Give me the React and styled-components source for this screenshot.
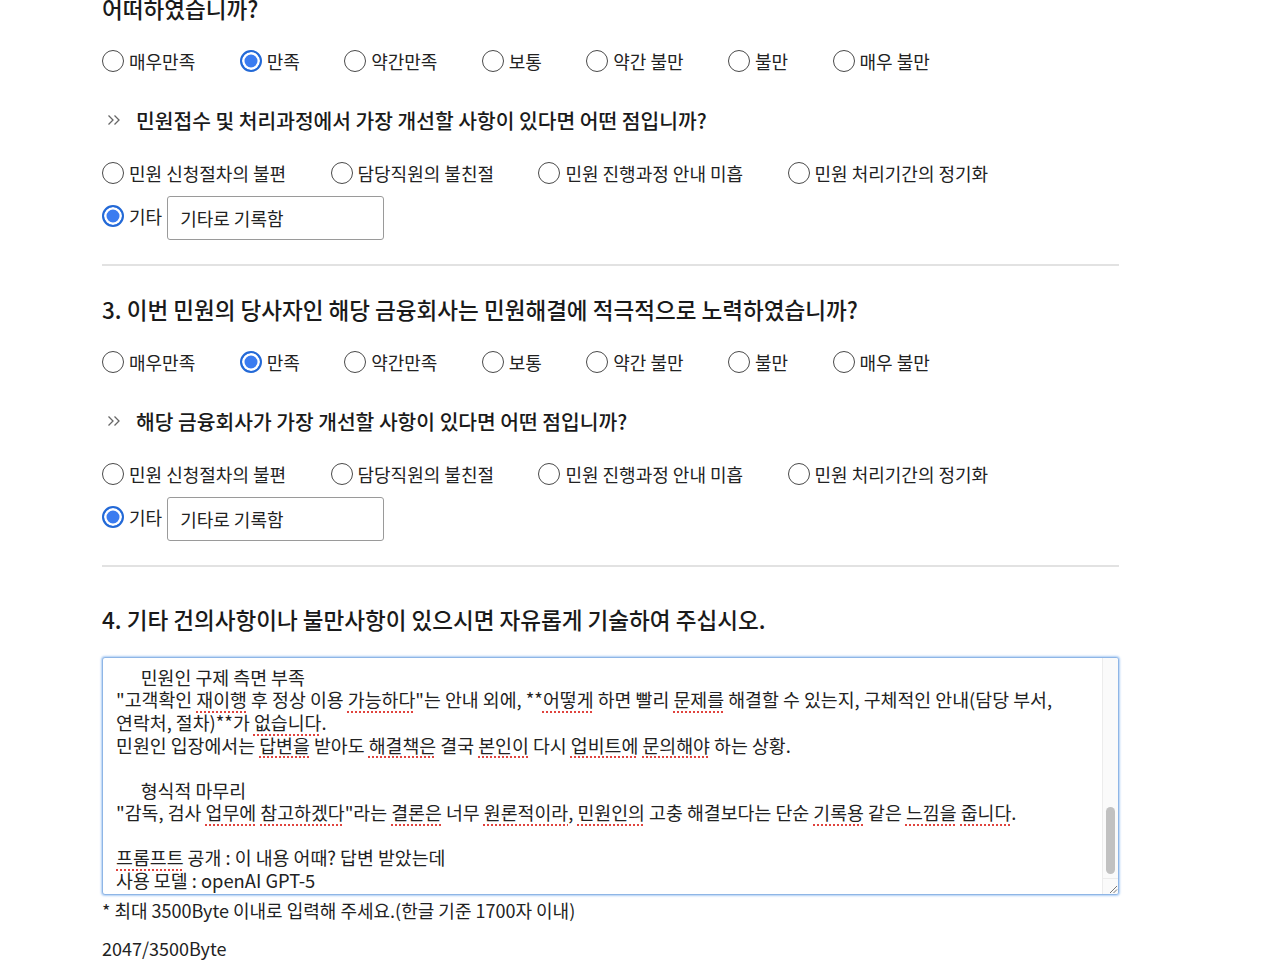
import React, { useLayoutEffect, useRef } from "react";
import styled, { createGlobalStyle } from "styled-components";

const Global = createGlobalStyle`
  html, body { margin: 0; padding: 0; background: #fff; }
  body {
    font-family: "Noto Sans CJK KR", "Noto Sans", sans-serif;
    color: #222;
  }
  * { box-sizing: border-box; }
`;

const Page = styled.div`
  width: 1017px;
  margin: -7px 0 0 102px;
  padding-bottom: 40px;
`;

const Section = styled.section`
  display: flex;
  flex-direction: column;
`;

const QuestionTitle = styled.h3`
  margin: ${(p) => p.$top || 0}px 0 0;
  font-size: 22.55px;
  line-height: 30px;
  font-weight: 500;
  color: #1a1a1a;
  white-space: nowrap;
`;

const RadioRow = styled.div`
  display: flex;
  align-items: center;
  margin-top: ${(p) => p.$top || 0}px;
  height: 24px;
`;

const RadioItem = styled.label`
  display: inline-flex;
  align-items: center;
  gap: 5px;
  margin-right: 44.4px;
  font-size: 18px;
  line-height: 24px;
  color: #222;
  white-space: nowrap;
  cursor: pointer;
`;

const RadioInput = styled.input.attrs({ type: "radio" })`
  appearance: none;
  -webkit-appearance: none;
  margin: 0;
  width: 22px;
  height: 22px;
  flex: none;
  border-radius: 50%;
  border: 1.5px solid #4a4a4a;
  background: #fff;
  &:checked {
    border: 2px solid #2369d6;
    background: #3b7cf0;
    box-shadow: inset 0 0 0 2.5px #fff;
  }
`;

const SubQuestion = styled.div`
  display: flex;
  align-items: center;
  gap: 15px;
  margin-top: ${(p) => p.$top || 0}px;
  padding-left: 5px;
  font-size: 20.35px;
  line-height: 28px;
  font-weight: 500;
  color: #1a1a1a;
  white-space: nowrap;
`;

const EtcRow = styled.div`
  display: flex;
  align-items: center;
  margin-top: 11px;
  height: 44px;
`;

const EtcLabel = styled(RadioItem)`
  margin-right: 5px;
  position: relative;
  top: -2px;
`;

const EtcInput = styled.input`
  width: 217px;
  height: 44px;
  border: 1px solid #9a9a9a;
  border-radius: 3px;
  padding: 0 12px;
  font-family: inherit;
  font-size: 18px;
  color: #222;
  background: #fff;
  outline: none;
`;

const Divider = styled.hr`
  margin: 24px 0 0;
  border: 0;
  height: 2px;
  background: #e2e2e2;
`;

const TextFrame = styled.div`
  margin-top: 23px;
  height: 238px;
  display: flex;
  border: 1px solid #8fb6e6;
  border-radius: 3px;
  box-shadow: 0 0 2px 1px rgba(110, 165, 235, 0.55);
  background: #fff;
  overflow: hidden;
`;

const TextContent = styled.div`
  flex: 1;
  min-width: 0;
  overflow: hidden;
  white-space: pre-wrap;
  word-break: keep-all;
  padding: 4px 12px 3px 13px;
  font-size: 18.35px;
  line-height: 22.55px;
  color: #222;
`;

const ScrollTrack = styled.div`
  position: relative;
  flex: none;
  width: 16px;
  background: #fafafa;
  border-left: 1px solid #ececec;
`;

const ScrollThumb = styled.div`
  position: absolute;
  left: 3px;
  right: 3px;
  bottom: 20px;
  height: 67px;
  border-radius: 5px;
  background: #c1c1c1;
`;

const Resizer = styled.div`
  position: absolute;
  left: 0;
  right: 0;
  bottom: 0;
  height: 16px;
  border-top: 1px solid #ececec;
  display: flex;
  align-items: flex-end;
  justify-content: flex-end;
`;

const Typo = styled.span`
  text-decoration: underline dotted #e0443e;
  text-decoration-thickness: 1.5px;
  text-underline-offset: 4px;
`;

const Note = styled.p`
  margin: 3px 0 0;
  font-size: 18px;
  line-height: 24px;
  color: #222;
`;

const Count = styled.p`
  margin: 14px 0 0;
  font-size: 18px;
  line-height: 24px;
  color: #222;
`;

const DoubleChevron = () => (
  <svg width="14" height="12" viewBox="0 0 14 12" fill="none" stroke="#666" strokeWidth="1.3">
    <polyline points="1.5,1.5 6,6 1.5,10.5" />
    <polyline points="7.5,1.5 12,6 7.5,10.5" />
  </svg>
);

const ResizeGrip = () => (
  <svg width="10" height="10" viewBox="0 0 10 10" stroke="#777" strokeWidth="1">
    <line x1="2" y1="9" x2="9" y2="2" />
    <line x1="5.5" y1="9" x2="9" y2="5.5" />
  </svg>
);

const SATIS = ["매우만족", "만족", "약간만족", "보통", "약간 불만", "불만", "매우 불만"];
const IMPROVE = ["민원 신청절차의 불편", "담당직원의 불친절", "민원 진행과정 안내 미흡", "민원 처리기간의 정기화"];

function SatisRow({ name, top }) {
  return (
    <RadioRow $top={top}>
      {SATIS.map((s) => (
        <RadioItem key={s}>
          <RadioInput name={name} defaultChecked={s === "만족"} />
          {s}
        </RadioItem>
      ))}
    </RadioRow>
  );
}

function ImproveBlock({ name, question }) {
  return (
    <>
      <SubQuestion $top={33}>
        <DoubleChevron />
        {question}
      </SubQuestion>
      <RadioRow $top={27}>
        {IMPROVE.map((s) => (
          <RadioItem key={s}>
            <RadioInput name={name} />
            {s}
          </RadioItem>
        ))}
      </RadioRow>
      <EtcRow>
        <EtcLabel>
          <RadioInput name={name} defaultChecked />
          기타
        </EtcLabel>
        <EtcInput defaultValue="기타로 기록함" />
      </EtcRow>
    </>
  );
}

const EARLIER = `업비트 민원 답변에 대한 검토 의견

      답변 요약
금융감독원을 통해 접수한 민원에 대해 업비트는 "고객확인 절차 재이행이 필요하며, 재이행 완료 후 정상 이용이 가능하다"는 취지로 답변하였습니다.
답변 내용 자체는 사실 관계를 설명하고 있으나, 민원인이 실제로 겪은 불편에 대한 설명은 충분하지 않습니다.

      긍정적인 부분
1. 민원 접수 후 비교적 빠른 시일 내에 답변이 도착하였습니다.
2. 계정 이용 제한의 원인이 고객확인 절차 미완료라는 점을 명확히 안내하였습니다.
3. 관련 법령(특정금융정보법)에 근거한 조치라는 점을 설명하였습니다.

      아쉬운 부분
1. 이용 제한이 발생한 시점과 사전 안내 여부에 대한 설명이 없습니다.
2. 재이행 절차를 진행했음에도 반복적으로 실패한 원인에 대한 확인이 없습니다.
3. 고객센터 연결이 어려웠던 점에 대한 언급이나 사과가 없습니다.

      설명 부족
답변이 절차적인 내용 위주로 작성되어 있어, 민원인이 궁금해한 "왜 이런 일이 생겼는지"에 대한 답이 부족합니다.

`;

function Complaint() {
  const ref = useRef(null);
  useLayoutEffect(() => {
    if (ref.current) ref.current.scrollTop = ref.current.scrollHeight;
  }, []);
  return (
    <TextFrame>
      <TextContent ref={ref} role="textbox" aria-multiline="true">
        {EARLIER}
        {"      민원인 구제 측면 부족\n"}
        {"\"고객확인 "}<Typo>재이행</Typo>{" 후 정상 이용 "}<Typo>가능하다</Typo>
        {"\"는 안내 외에, **"}<Typo>어떻게</Typo>{" 하면 빨리 "}<Typo>문제를</Typo>
        {" 해결할 수 있는지, 구체적인 안내(담당 부서, 연락처, 절차)**가 "}<Typo>없습니다</Typo>{".\n"}
        {"민원인 입장에서는 "}<Typo>답변을</Typo>{" 받아도 "}<Typo>해결책은</Typo>{" 결국 "}
        <Typo>본인이</Typo>{" 다시 "}<Typo>업비트에</Typo>{" "}<Typo>문의해야</Typo>{" 하는 상황.\n"}
        {"\n"}
        {"      형식적 마무리\n"}
        {"\"감독, 검사 "}<Typo>업무에</Typo>{" "}<Typo>참고하겠다</Typo>{"\"라는 "}<Typo>결론은</Typo>
        {" 너무 "}<Typo>원론적이라</Typo>{", "}<Typo>민원인의</Typo>{" 고충 해결보다는 단순 "}
        <Typo>기록용</Typo>{" 같은 "}<Typo>느낌을</Typo>{" "}<Typo>줍니다</Typo>{".\n"}
        {"\n"}
        <Typo>프롬프트</Typo>{" 공개 : 이 내용 어때? 답변 받았는데\n"}
        {"사용 모델 : openAI GPT-5"}
      </TextContent>
      <ScrollTrack aria-hidden="true">
        <ScrollThumb />
        <Resizer>
          <ResizeGrip />
        </Resizer>
      </ScrollTrack>
    </TextFrame>
  );
}

export default function App() {
  return (
    <>
      <Global />
      <Page>
        <Section>
          <QuestionTitle>어떠하였습니까?</QuestionTitle>
          <SatisRow name="q2" top={26} />
          <ImproveBlock name="q2b" question="민원접수 및 처리과정에서 가장 개선할 사항이 있다면 어떤 점입니까?" />
        </Section>
        <Divider />
        <Section>
          <QuestionTitle $top={28}>3. 이번 민원의 당사자인 해당 금융회사는 민원해결에 적극적으로 노력하였습니까?</QuestionTitle>
          <SatisRow name="q3" top={26} />
          <ImproveBlock name="q3b" question="해당 금융회사가 가장 개선할 사항이 있다면 어떤 점입니까?" />
        </Section>
        <Divider />
        <Section>
          <QuestionTitle $top={37}>4. 기타 건의사항이나 불만사항이 있으시면 자유롭게 기술하여 주십시오.</QuestionTitle>
          <Complaint />
          <Note>* 최대 3500Byte 이내로 입력해 주세요.(한글 기준 1700자 이내)</Note>
          <Count>2047/3500Byte</Count>
        </Section>
      </Page>
    </>
  );
}
